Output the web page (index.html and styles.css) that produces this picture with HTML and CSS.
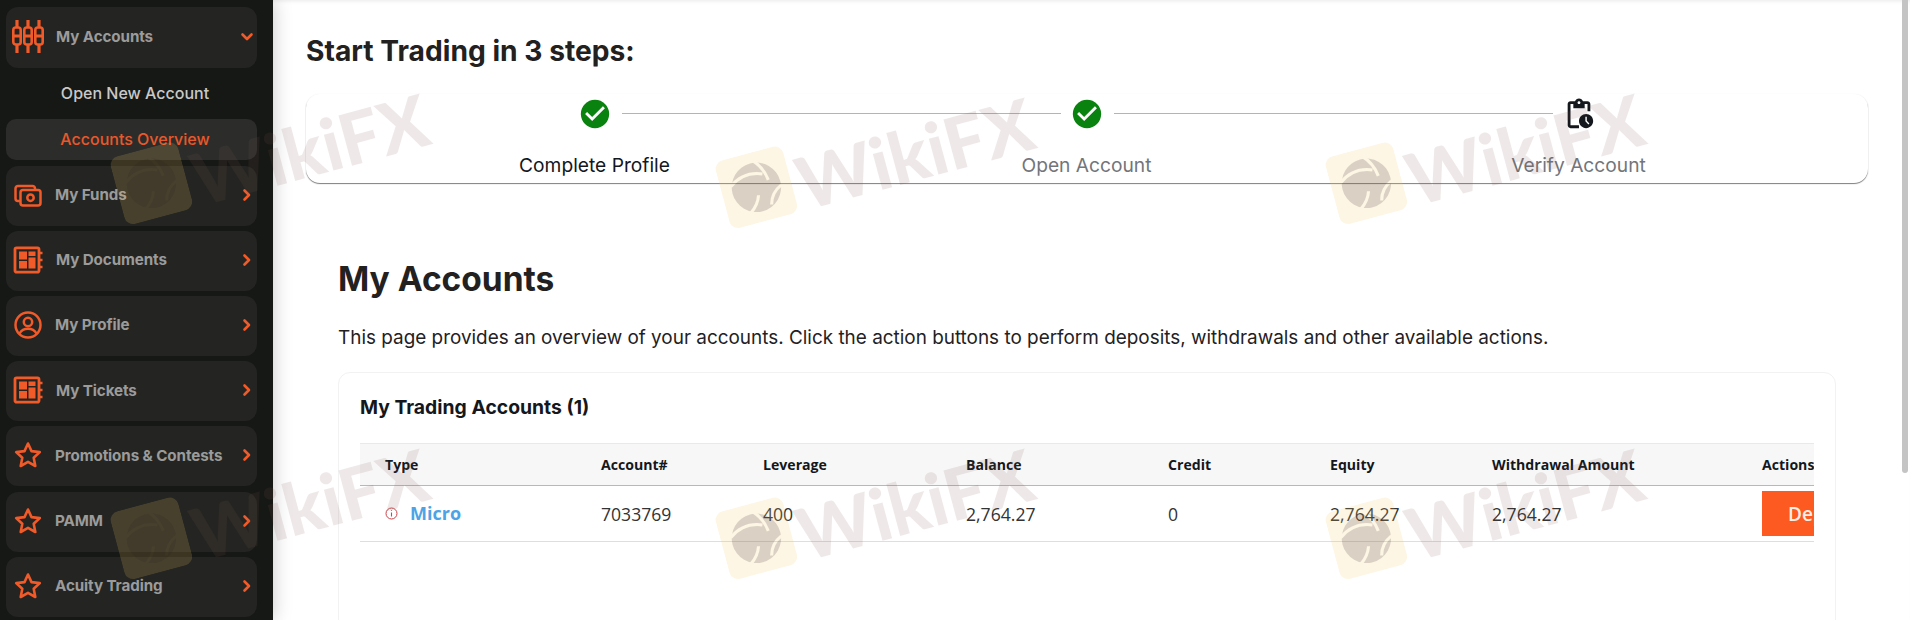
FILE: index.html
```html
<!DOCTYPE html>
<html lang="en">
<head>
<meta charset="utf-8">
<title>My Accounts</title>
<link rel="stylesheet" href="styles.css">
</head>
<body>
<svg class="defs" width="0" height="0" aria-hidden="true">
  <defs>
    <symbol id="chev" viewBox="0 0 10 14"><path d="M2.5 2.5 7 7l-4.500 4.500" fill="none" stroke="currentColor" stroke-width="2.600" stroke-linecap="round" stroke-linejoin="round"/></symbol>
    <symbol id="star" viewBox="0 0 28 28"><path d="M14 2.500l3.500 7.600 8.300 1-6.100 5.700 1.600 8.200L14 20.900 6.700 25l1.600-8.200L2.200 11.100l8.300-1z" fill="none" stroke="currentColor" stroke-width="2.600" stroke-linejoin="round"/></symbol>
    <symbol id="board" viewBox="0 0 30 28"><path d="M3.500 1.800h21a1.500 1.500 0 0 1 1.500 1.500v21.400a1.500 1.500 0 0 1-1.500 1.500h-21A1.500 1.500 0 0 1 2 24.700V3.300a1.500 1.500 0 0 1 1.500-1.500z" fill="none" stroke="currentColor" stroke-width="2.800"/><path d="M6 5.500h8v8H6zM15.500 5.500H22.500v4.500h-7zM15.500 11.500H22.500V22.500h-7zM6 15h8v7.500H6z" fill="currentColor"/><path d="M26 7h3.500M26 14h3.500M26 21h3.500" stroke="currentColor" stroke-width="2.400"/></symbol>
    <mask id="bird-cuts" maskUnits="userSpaceOnUse" x="0" y="0" width="68" height="68">
      <rect width="68" height="68" fill="#fff"/>
      <path d="M10 27c11-8 21-9 33-4M37 8c6 6 9 13 10 22M58 38c-7 3-12 8-14 16M22 57c6-4 10-9 12-15" fill="none" stroke="#000" stroke-width="3"/>
    </mask>
    <symbol id="eagle" viewBox="0 0 68 68"><rect width="68" height="68" rx="9" class="wm-tile"/><circle cx="34" cy="34" r="24" class="wm-bird" mask="url(#bird-cuts)"/></symbol>
  </defs>
</svg>
<div class="shell">
  <aside class="sidebar">
    <nav class="nav">
      <a class="item">
        <span class="ico">
          <svg width="34" height="33" viewBox="0 0 34 33"><g fill="none" stroke="currentColor"><path d="M6 0v8M6 24v9M17 0v8M17 24v9M28 0v8M28 24v9" stroke-width="3.200"/><rect x="2.300" y="7.500" width="7.400" height="17" rx="2.500" stroke-width="2.600"/><rect x="13.300" y="7.500" width="7.400" height="17" rx="2.500" stroke-width="2.600"/><rect x="24.300" y="7.500" width="7.400" height="17" rx="2.500" stroke-width="2.600"/><path d="M2 16h8M13 16h8M24 16h8" stroke-width="2.800"/></g></svg>
        </span>
        <span class="label label-lead">My Accounts</span>
        <svg class="chev chev-down" width="10" height="14"><use href="#chev"/></svg>
      </a>
      <a class="sub">Open New Account</a>
      <a class="sub sub-active">Accounts Overview</a>
      <a class="item">
        <span class="ico">
          <svg width="28" height="24" viewBox="0 0 28 24"><g fill="none" stroke="currentColor" stroke-width="2.500"><path d="M6 18H4a2.500 2.500 0 0 1-2.500-2.500v-10A2.500 2.500 0 0 1 4 3h14.500A2.500 2.500 0 0 1 21 5.500V7"/><rect x="6.500" y="7" width="20" height="15.500" rx="2.500"/><circle cx="16.500" cy="14.700" r="3.200"/></g></svg>
        </span>
        <span class="label">My Funds</span>
        <svg class="chev" width="10" height="14"><use href="#chev"/></svg>
      </a>
      <a class="item">
        <span class="ico"><svg width="30" height="28"><use href="#board"/></svg></span>
        <span class="label label-lead">My Documents</span>
        <svg class="chev" width="10" height="14"><use href="#chev"/></svg>
      </a>
      <a class="item">
        <span class="ico">
          <svg width="28" height="28" viewBox="0 0 28 28"><g fill="none" stroke="currentColor" stroke-width="2.500"><circle cx="14" cy="14" r="12.500"/><circle cx="14" cy="11" r="4.200"/><path d="M5.500 22.500c2-3.500 5-4.800 8.500-4.800s6.500 1.300 8.500 4.800"/></g></svg>
        </span>
        <span class="label">My Profile</span>
        <svg class="chev" width="10" height="14"><use href="#chev"/></svg>
      </a>
      <a class="item">
        <span class="ico"><svg width="30" height="28"><use href="#board"/></svg></span>
        <span class="label label-lead">My Tickets</span>
        <svg class="chev" width="10" height="14"><use href="#chev"/></svg>
      </a>
      <a class="item">
        <span class="ico"><svg width="28" height="28"><use href="#star"/></svg></span>
        <span class="label">Promotions &amp; Contests</span>
        <svg class="chev" width="10" height="14"><use href="#chev"/></svg>
      </a>
      <a class="item">
        <span class="ico"><svg width="28" height="28"><use href="#star"/></svg></span>
        <span class="label">PAMM</span>
        <svg class="chev" width="10" height="14"><use href="#chev"/></svg>
      </a>
      <a class="item">
        <span class="ico"><svg width="28" height="28"><use href="#star"/></svg></span>
        <span class="label">Acuity Trading</span>
        <svg class="chev" width="10" height="14"><use href="#chev"/></svg>
      </a>
    </nav>
  </aside>

  <main class="main">
    <h2 class="steps-title">Start Trading in 3 steps:</h2>
    <section class="stepper">
      <div class="step step-linked">
        <svg class="step-ico" width="34" height="34" viewBox="0 0 24 24"><path fill="#0a820f" d="M12 2C6.480 2 2 6.480 2 12s4.480 10 10 10 10-4.480 10-10S17.520 2 12 2z"/><path fill="#fff" d="M10 17l-5-5 1.410-1.410L10 14.170l7.590-7.590L19 8z"/></svg>
        <span class="step-label step-label-on">Complete Profile</span>
      </div>
      <div class="step step-linked">
        <svg class="step-ico" width="34" height="34" viewBox="0 0 24 24"><path fill="#0a820f" d="M12 2C6.480 2 2 6.480 2 12s4.480 10 10 10 10-4.480 10-10S17.520 2 12 2z"/><path fill="#fff" d="M10 17l-5-5 1.410-1.410L10 14.170l7.590-7.590L19 8z"/></svg>
        <span class="step-label">Open Account</span>
      </div>
      <div class="step">
        <svg class="step-ico" width="34" height="34" viewBox="0 0 24 24"><path fill="#14171c" d="M17 12c-2.760 0-5 2.240-5 5s2.240 5 5 5 5-2.240 5-5-2.240-5-5-5zm1.650 7.350L16.500 17.200V14h1v2.790l1.850 1.850-.7.710zM18 3h-3.180C14.400 1.840 13.300 1 12 1s-2.400.84-2.820 2H6c-1.100 0-2 .9-2 2v15c0 1.100.9 2 2 2h6v-2H6V5h2v3h8V5h2v5h2V5c0-1.100-.9-2-2-2zm-6 2c-.55 0-1-.45-1-1s.45-1 1-1 1 .45 1 1-.45 1-1 1z"/></svg>
        <span class="step-label">Verify Account</span>
      </div>
    </section>

    <section class="content">
      <h1 class="page-title">My Accounts</h1>
      <p class="intro">This page provides an overview of your accounts. Click the action buttons to perform deposits, withdrawals and other available actions.</p>
      <div class="card">
        <h3 class="card-title">My Trading Accounts (1)</h3>
        <div class="table-clip">
          <table class="accounts">
            <colgroup>
              <col class="c-type"><col class="c-acc"><col class="c-lev"><col class="c-bal"><col class="c-cre"><col class="c-equ"><col class="c-wit"><col class="c-act">
            </colgroup>
            <thead>
              <tr><th>Type</th><th>Account#</th><th>Leverage</th><th>Balance</th><th>Credit</th><th>Equity</th><th>Withdrawal Amount</th><th>Actions</th></tr>
            </thead>
            <tbody>
              <tr>
                <td>
                  <span class="type-cell">
                    <svg width="13" height="13" viewBox="0 0 13 13"><circle cx="6.500" cy="6.500" r="5.500" fill="none" stroke="#c9434a" stroke-width="1"/><path d="M6.500 3.200v.9M6.500 5.500v4" stroke="#c9434a" stroke-width="1.100"/></svg>
                    <a class="micro">Micro</a>
                  </span>
                </td>
                <td>7033769</td><td>400</td><td>2,764.27</td><td>0</td><td>2,764.27</td><td>2,764.27</td>
                <td><button class="deposit">Deposit</button></td>
              </tr>
            </tbody>
          </table>
        </div>
      </div>
    </section>
  </main>
</div>
<div class="scrollbar"></div>

<div class="wm wm-a"><svg width="70" height="70"><use href="#eagle"/></svg><span>WikiFX</span></div>
<div class="wm wm-b"><svg width="70" height="70"><use href="#eagle"/></svg><span>WikiFX</span></div>
<div class="wm wm-c"><svg width="70" height="70"><use href="#eagle"/></svg><span>WikiFX</span></div>
<div class="wm wm-d"><svg width="70" height="70"><use href="#eagle"/></svg><span>WikiFX</span></div>
<div class="wm wm-e"><svg width="70" height="70"><use href="#eagle"/></svg><span>WikiFX</span></div>
<div class="wm wm-f"><svg width="70" height="70"><use href="#eagle"/></svg><span>WikiFX</span></div>
</body>
</html>
```

FILE: styles.css
```css
* { box-sizing: border-box; }
html, body { margin: 0; height: 620px; overflow: hidden; background: #fff; }
body { position: relative; font-family: Inter, "Liberation Sans", sans-serif; color: #23211f; }
.defs { position: absolute; }
.shell { display: flex; height: 620px; }

/* sidebar */
.sidebar {
  flex: 0 0 273px; background: #161815;
  box-shadow: 0 0 18px rgba(0,0,0,.22); position: relative; z-index: 1;
}
.nav { display: flex; flex-direction: column; gap: 5.200px; padding: 7px 16px 0 6px; }
.item {
  display: flex; align-items: center; height: 60px; padding-bottom: 2px; border-radius: 12px; background: #242522; color: #9b9b9b;
}
.item:first-child { height: 61px; }
.ico { flex: 0 0 49px; display: flex; justify-content: center; padding-right: 5px; color: #f15a29; }
.label { font-size: 15.200px; font-weight: 700; letter-spacing: -.1px; }
.label-lead { margin-left: 1px; }
.chev { margin-left: auto; margin-right: 5px; color: #f15a29; }
.chev-down { transform: rotate(90deg); }
.sub {
  display: flex; align-items: center; justify-content: center; height: 41px; padding: 0 0 2px 7px;
  font-size: 16px; font-weight: 500; color: #c9c9c9; border-radius: 10px;
}
.sub-active { background: #2c2d2b; color: #e9582a; }

/* main */
.main {
  flex: 1; min-width: 0; padding: 34px 42px 0 33px;
  box-shadow: inset 0 4px 4px -3px rgba(0,0,0,.09);
}
.steps-title { margin: 0 0 26px; font-size: 28.200px; line-height: 34px; font-weight: 700; color: #23211f; }
.stepper {
  display: grid; grid-template-columns: repeat(3, 492px); padding: 0 42.500px; height: 89px;
  border-radius: 14px; background: #fff;
  box-shadow: 0 1px 1px rgba(0,0,0,.5), 0 0 2px rgba(0,0,0,.04);
}
.step { position: relative; display: flex; flex-direction: column; align-items: center; padding-top: 2px; }
.step-ico { margin-top: 1px; }
.step-linked::after {
  content: ""; position: absolute; top: 19px; left: calc(50% + 27px); width: 439px; height: 1px; background: #b4b4b4;
}
.step-label { margin-top: 22px; font-size: 19.200px; line-height: 24px; color: #72757a; }
.step-label-on { color: #14171c; }

.content { padding: 0 0 0 32px; }
.page-title { margin: 74px 0 0; font-size: 33.500px; line-height: 44px; font-weight: 700; color: #23211f; }
.intro { margin: 23px 0 0; font-size: 18.920px; line-height: 28px; color: #23211f; }
.card {
  margin: 20px 0 0 0; width: 1498px; height: 320px; padding: 22px 21px 0 21px; border-radius: 12px;
  border: 1px solid #f2f2f2; background: #fff;
}
.card-title { margin: 0 0 24px; font-size: 19.350px; line-height: 24px; font-weight: 700; color: #14171c; }
.table-clip { width: 1454px; overflow: hidden; }
.accounts {
  border-collapse: collapse; table-layout: fixed; width: 1577px;
  font-family: "Open Sans", "Liberation Sans", sans-serif; font-size: 17.600px; color: #333;
}
.c-type { width: 216px; } .c-acc { width: 162px; } .c-lev { width: 203px; } .c-bal { width: 202px; }
.c-cre { width: 162px; } .c-equ { width: 162px; } .c-wit { width: 270px; } .c-act { width: 200px; }
.accounts th {
  height: 42px; padding: 0 0 0 25px; text-align: left; font-size: 14.100px; font-weight: 700; color: #14171c; background: #f7f7f7;
  border-top: 1px solid #e9e9e9; border-bottom: 1px solid #b8b8b8;
}
.accounts td { height: 56px; padding: 1px 0 0 25px; border-bottom: 1px solid #dedede; }
.type-cell { display: flex; align-items: center; gap: 12px; margin-top: -2px; }
.micro { font-size: 18px; font-weight: 700; color: #4da3e6; }
.deposit {
  display: block; height: 45px; width: 130px; margin-top: -1px; border: 0; padding: 0 0 0 26px; text-align: left; background: #fc5a20; color: #fbeee8;
  font-family: "Open Sans", "Liberation Sans", sans-serif; font-size: 19px; font-weight: 600;
}

/* fake page scrollbar */
.scrollbar { position: absolute; top: 0; right: 2px; width: 6px; height: 473px; background: #c4c4c4; border-radius: 0 0 3px 3px; }

/* watermark */
.wm {
  position: absolute; display: flex; align-items: center; gap: 6px; z-index: 5; pointer-events: none;
  transform: rotate(-15deg); transform-origin: 50% 50%;
  font-family: Lato, "Open Sans", sans-serif; font-weight: 900; font-size: 72px; line-height: 80px;
  color: rgba(120,85,80,.13); white-space: nowrap;
}
.wm svg { overflow: visible; transform: translateY(-7px); }
.wm-tile { fill: rgba(248,200,100,.17); }
.wm-bird { fill: rgba(40,30,35,.17); }
.wm-a { left: 114px; top: 118px; }
.wm-b { left: 719px; top: 122px; }
.wm-c { left: 1329px; top: 118px; }
.wm-d { left: 114px; top: 473px; }
.wm-e { left: 719px; top: 473px; }
.wm-f { left: 1329px; top: 473px; }
```
